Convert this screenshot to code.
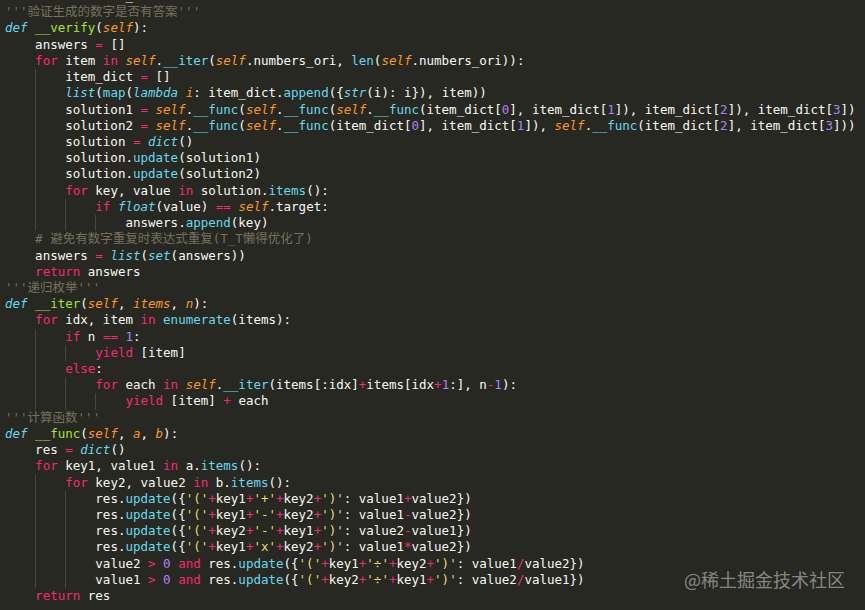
import React from 'react';

type Kind = 'plain' | 'kw' | 'storage' | 'fn' | 'param' | 'type' | 'call' | 'num' | 'str' | 'cmt';

interface Token {
  text: string;
  kind: Kind;
}

const kindClass: Record<Kind, string> = {
  plain: '',
  kw: 'text-[#f92672]',
  storage: 'text-[#66d9ef] italic',
  fn: 'text-[#a6e22e]',
  param: 'text-[#fd971f] italic',
  type: 'text-[#66d9ef] italic',
  call: 'text-[#66d9ef]',
  num: 'text-[#ae81ff]',
  str: 'text-[#e6db74]',
  cmt: 'text-[#75715e]',
};

const KEYWORDS = ['for', 'in', 'if', 'else', 'return', 'yield', 'and', 'or', 'not'];
const TYPES = ['list', 'dict', 'float', 'set', 'str', 'int'];
const BUILTINS = ['map', 'len', 'enumerate'];

const source: string[] = [
  '    self.numbers_ori = numbers',
  "'''验证生成的数字是否有答案'''",
  'def __verify(self):',
  '    answers = []',
  '    for item in self.__iter(self.numbers_ori, len(self.numbers_ori)):',
  '        item_dict = []',
  '        list(map(lambda i: item_dict.append({str(i): i}), item))',
  '        solution1 = self.__func(self.__func(self.__func(item_dict[0], item_dict[1]), item_dict[2]), item_dict[3])',
  '        solution2 = self.__func(self.__func(item_dict[0], item_dict[1]), self.__func(item_dict[2], item_dict[3]))',
  '        solution = dict()',
  '        solution.update(solution1)',
  '        solution.update(solution2)',
  '        for key, value in solution.items():',
  '            if float(value) == self.target:',
  '                answers.append(key)',
  '    # 避免有数字重复时表达式重复(T_T懒得优化了)',
  '    answers = list(set(answers))',
  '    return answers',
  "'''递归枚举'''",
  'def __iter(self, items, n):',
  '    for idx, item in enumerate(items):',
  '        if n == 1:',
  '            yield [item]',
  '        else:',
  '            for each in self.__iter(items[:idx]+items[idx+1:], n-1):',
  '                yield [item] + each',
  "'''计算函数'''",
  'def __func(self, a, b):',
  '    res = dict()',
  '    for key1, value1 in a.items():',
  '        for key2, value2 in b.items():',
  "            res.update({'('+key1+'+'+key2+')': value1+value2})",
  "            res.update({'('+key1+'-'+key2+')': value1-value2})",
  "            res.update({'('+key2+'-'+key1+')': value2-value1})",
  "            res.update({'('+key1+'x'+key2+')': value1*value2})",
  "            value2 > 0 and res.update({'('+key1+'÷'+key2+')': value1/value2})",
  "            value1 > 0 and res.update({'('+key2+'÷'+key1+')': value2/value1})",
  '    return res',
];

// very small python highlighter, monokai flavoured
const tokenize = (body: string): Token[] => {
  const trimmed = body.trim();
  if (trimmed.startsWith("'''") || trimmed.startsWith('#')) {
    return [{ text: body, kind: 'cmt' }];
  }
  const parts = body.match(/'[^']*'|\d+|[A-Za-z_]\w*|==|\s+|./g) || [];
  const out: Token[] = [];
  let prev = '';
  let inParams = false;
  parts.forEach((p, idx) => {
    let next = '';
    for (let j = idx + 1; j < parts.length; j++) {
      if (parts[j].trim()) {
        next = parts[j];
        break;
      }
    }
    let kind: Kind = 'plain';
    if (!p.trim()) {
      kind = 'plain';
    } else if (p.startsWith("'")) {
      kind = 'str';
    } else if (/^\d+$/.test(p)) {
      kind = 'num';
    } else if (p === 'def' || p === 'lambda') {
      kind = 'storage';
    } else if (prev === 'def') {
      kind = 'fn';
      inParams = true;
    } else if (prev === 'lambda') {
      kind = 'param';
    } else if (inParams && /^[A-Za-z_]/.test(p)) {
      kind = 'param';
    } else if (p === 'self') {
      kind = 'param';
    } else if (KEYWORDS.includes(p)) {
      kind = 'kw';
    } else if (TYPES.includes(p)) {
      kind = 'type';
    } else if (BUILTINS.includes(p)) {
      kind = 'call';
    } else if (prev === '.' && next === '(') {
      kind = 'call';
    } else if (['=', '==', '+', '-', '*', '/', '>', '<'].includes(p)) {
      kind = 'kw';
    }
    if (inParams && p === ')') inParams = false;
    if (p.trim()) prev = p;
    out.push({ text: p, kind });
  });
  return out;
};

const CodeLine: React.FC<{ line: string; className?: string }> = ({ line, className }) => {
  const indent = line.length - line.trimStart().length;
  const groups = Math.floor(indent / 4);
  const body = line.slice(groups * 4);
  return (
    <div className={`h-[16.22px] whitespace-pre ${className || ''}`}>
      {Array.from({ length: groups }).map((_, g) => (
        <span
          key={g}
          className={`inline-block h-[16.22px] align-top ${g > 0 ? 'shadow-[inset_1px_0_0_#45463f]' : ''}`}
        >
          {'    '}
        </span>
      ))}
      {tokenize(body).map((tok, i) => (
        <span key={i} className={kindClass[tok.kind]}>
          {tok.text}
        </span>
      ))}
    </div>
  );
};

const App: React.FC = () => {
  return (
    <div className="relative h-[610px] w-[865px] overflow-hidden bg-[#272822]">
      <div className="-mt-[12px] pl-[5px] font-['DejaVu_Sans_Mono','Noto_Sans_CJK_SC',monospace] text-[12.5px] leading-[16.22px] text-[#f8f8f2]">
        {source.map((line, i) => (
          <CodeLine key={i} line={line} />
        ))}
      </div>

      {/* site watermark */}
      <div className="absolute right-[20px] top-[568px] font-['Noto_Sans_CJK_SC',sans-serif] text-[18px] leading-[22px] text-white/45">
        @稀土掘金技术社区
      </div>
    </div>
  );
};

export default App;
